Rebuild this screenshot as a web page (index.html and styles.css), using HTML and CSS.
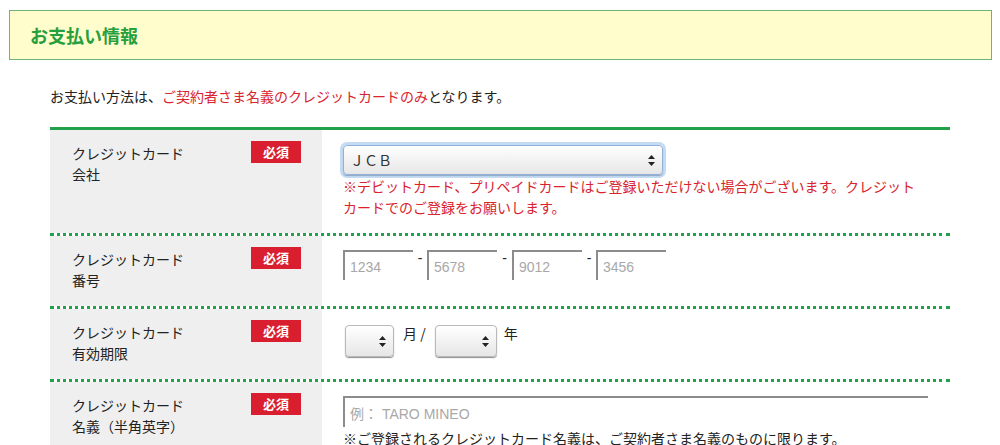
FILE: index.html
```html
<!DOCTYPE html>
<html lang="ja">
<head>
    <meta charset="UTF-8">
    <title>お支払い情報</title>
    <link rel="stylesheet" href="styles.css">
</head>
<body>
    <h2 class="section-title">お支払い情報</h2>

    <div class="content">
        <p class="intro">お支払い方法は、<span class="red">ご契約者さま名義のクレジットカードのみ</span>となります。</p>

        <div class="form-table">
            <!-- カード会社 -->
            <div class="row">
                <div class="label">
                    <span>クレジットカード<br>会社</span>
                    <span class="required">必須</span>
                </div>
                <div class="field">
                    <span class="select-wrap">
                        <select class="select select-brand focused">
                            <option>ＪＣＢ</option>
                        </select>
                        <svg class="arrows" width="7" height="11" viewBox="0 0 7 11"><path d="M3.5 0 L7 4 L0 4 Z M0 7 L7 7 L3.5 11 Z" fill="#222"/></svg>
                    </span>
                    <p class="note red">※デビットカード、プリペイドカードはご登録いただけない場合がございます。クレジットカードでのご登録をお願いします。</p>
                </div>
            </div>

            <!-- カード番号 -->
            <div class="row">
                <div class="label">
                    <span>クレジットカード<br>番号</span>
                    <span class="required">必須</span>
                </div>
                <div class="field card-number">
                    <input class="text num" type="text" placeholder="1234">
                    <span class="dash">-</span>
                    <input class="text num" type="text" placeholder="5678">
                    <span class="dash">-</span>
                    <input class="text num" type="text" placeholder="9012">
                    <span class="dash">-</span>
                    <input class="text num" type="text" placeholder="3456">
                </div>
            </div>

            <!-- 有効期限 -->
            <div class="row">
                <div class="label">
                    <span>クレジットカード<br>有効期限</span>
                    <span class="required">必須</span>
                </div>
                <div class="field expiry">
                    <span class="select-wrap">
                        <select class="select select-month"><option></option></select>
                        <svg class="arrows" width="7" height="11" viewBox="0 0 7 11"><path d="M3.5 0 L7 4 L0 4 Z M0 7 L7 7 L3.5 11 Z" fill="#222"/></svg>
                    </span>
                    <span class="unit">月 /</span>
                    <span class="select-wrap">
                        <select class="select select-year"><option></option></select>
                        <svg class="arrows" width="7" height="11" viewBox="0 0 7 11"><path d="M3.5 0 L7 4 L0 4 Z M0 7 L7 7 L3.5 11 Z" fill="#222"/></svg>
                    </span>
                    <span class="unit">年</span>
                </div>
            </div>

            <!-- 名義 -->
            <div class="row">
                <div class="label">
                    <span>クレジットカード<br>名義（半角英字）</span>
                    <span class="required">必須</span>
                </div>
                <div class="field">
                    <input class="text name" type="text" placeholder="例： TARO MINEO">
                    <p class="note">※ご登録されるクレジットカード名義は、ご契約者さま名義のものに限ります。</p>
                </div>
            </div>
        </div>
    </div>
</body>
</html>
```

FILE: styles.css
```css
* {
    box-sizing: border-box;
    margin: 0;
    padding: 0;
}

body {
    font-family: "Noto Sans CJK JP", "Liberation Sans", sans-serif;
    font-size: 14px;
    line-height: 21px;
    color: #222;
    background: #fff;
}

.red {
    color: #d9232e;
}

.section-title {
    margin: 10px 8px 0 9px;
    height: 50px;
    padding-left: 20px;
    display: flex;
    align-items: center;
    background: #fffdcb;
    border: 1px solid #6cb47c;
    color: #26a03e;
    font-size: 18px;
    font-weight: 700;
}

.content {
    padding: 0 50px;
}

.intro {
    margin-top: 26px;
}

.form-table {
    margin-top: 20px;
    border-top: 3px solid #21a04a;
}

.row {
    display: grid;
    grid-template-columns: 272px 1fr;
    border-bottom: 3px dotted #23a04e;
}

.label {
    background: #efefef;
    padding: 13px 21px 15px 22px;
    display: flex;
    justify-content: space-between;
    align-items: flex-start;
}

.required {
    width: 50px;
    height: 22px;
    margin-top: -2px;
    background: #d91f2f;
    color: #fff;
    font-size: 13px;
    font-weight: 700;
    line-height: 22px;
    text-align: center;
}

.field {
    padding: 15px 30px 15px 21px;
}

/* selects */
.select-wrap {
    position: relative;
    display: inline-block;
}

.select {
    appearance: none;
    -webkit-appearance: none;
    display: block;
    height: 30px;
    border: 1px solid #b9b9b9;
    border-radius: 4px;
    background: linear-gradient(#ffffff, #e6e6e6);
    box-shadow: 0 1px 1px rgba(0, 0, 0, 0.45);
    font-family: "Noto Sans CJK JP", sans-serif;
    font-size: 14px;
    color: #333;
    padding-left: 6px;
    outline: none;
}

.select.focused {
    border-color: #8fb2dc;
    box-shadow: 0 0 0 3px rgba(150, 190, 235, 0.55), 0 1px 1px rgba(0, 0, 0, 0.45);
}

.select-brand {
    width: 320px;
}

.arrows {
    position: absolute;
    right: 8px;
    top: 50%;
    margin-top: -5px;
    pointer-events: none;
}

.note {
    margin-top: 1px;
}

/* text inputs */
.text {
    height: 30px;
    border: none;
    border-top: 2px solid #8c8c8c;
    border-left: 2px solid #8c8c8c;
    background: #fff;
    padding: 2px 0 0 5px;
    font-family: "Liberation Sans", "Noto Sans CJK JP", sans-serif;
    font-size: 14px;
    outline: none;
}

.text::placeholder {
    color: #a8a8a8;
}

.card-number {
    display: flex;
    align-items: flex-start;
    padding-top: 14px;
}

.num {
    width: 70px;
}

.dash {
    width: 14px;
    text-align: center;
    line-height: 16px;
    font-family: "Liberation Sans", sans-serif;
}

.dash:nth-of-type(2) {
    width: 15px;
}

.expiry {
    display: flex;
    align-items: flex-start;
    padding-top: 16px;
    padding-left: 23px;
}

.expiry .select {
    height: 32px;
}

.select-month {
    width: 49px;
}

.select-year {
    width: 62px;
}

.unit {
    margin: -2px 9px 0 9px;
}

.expiry .unit:last-child {
    margin-left: 7px;
}

.name {
    width: 585px;
    height: 31px;
    margin-top: -1px;
    display: block;
}
```
